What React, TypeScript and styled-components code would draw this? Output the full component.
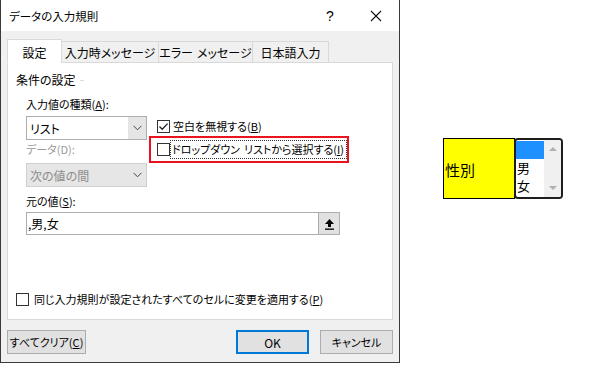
import React from 'react';
import styled, {createGlobalStyle} from 'styled-components';

const GlobalStyle = createGlobalStyle`
    body {
        margin: 0;
        background: #fff;
        font-family: "Noto Sans CJK JP", "Noto Sans", sans-serif;
        font-size: 11px;
        color: #000;
        font-feature-settings: "palt";
        white-space: nowrap;
    }
`

const U = styled.span`
    text-decoration: underline;
    text-underline-offset: 1px;
`

const WordGap = styled.span`
    display: inline-block;
    width: 4px;
`

const Check = ({checked}: {checked?: boolean}) => (
    <CheckBox>
        {checked && (
            <svg width="11" height="11" viewBox="0 0 11 11">
                <polyline points="1.5,5.5 4.2,8.3 9.6,2.6" fill="none" stroke="#222" strokeWidth="1.3"/>
            </svg>
        )}
    </CheckBox>
)

const Chevron = () => (
    <svg width="9" height="6" viewBox="0 0 9 6">
        <polyline points="0.5,0.8 4.5,4.8 8.5,0.8" fill="none" stroke="#444" strokeWidth="1"/>
    </svg>
)

export default function App() {
    return (
        <>
            <GlobalStyle/>
            <Page>
                <Dialog>
                    <TitleBar>
                        <Title>データの入力規則</Title>
                        <TitleButton>?</TitleButton>
                        <TitleButton>
                            <svg width="12" height="12" viewBox="0 0 12 12">
                                <path d="M1 1 L11 11 M11 1 L1 11" stroke="#111" strokeWidth="1.1"/>
                            </svg>
                        </TitleButton>
                    </TitleBar>
                    <Body>
                        <TabRow>
                            <Tab active width={55}>設定</Tab>
                            <Tab width={98}>入力時メッセージ</Tab>
                            <Tab width={95}>エラー<WordGap/>メッセージ</Tab>
                            <Tab width={77}>日本語入力</Tab>
                        </TabRow>
                        <Panel>
                            <GroupHeader>
                                <span>条件の設定</span>
                                <GroupLine/>
                            </GroupHeader>
                            <Criteria>
                                <LeftColumn>
                                    <FieldLabel top={8}>入力値の種類(<U>A</U>):</FieldLabel>
                                    <Select top={4}>
                                        <SelectText>リスト</SelectText>
                                        <DropButton><Chevron/></DropButton>
                                    </Select>
                                    <FieldLabel top={1} disabled>データ(D):</FieldLabel>
                                    <Select top={6} disabled>
                                        <SelectText>次の値の間</SelectText>
                                        <DropButton disabled><Chevron/></DropButton>
                                    </Select>
                                </LeftColumn>
                                <RightColumn>
                                    <CheckRow>
                                        <Check checked/>
                                        <span>空白を無視する(<U>B</U>)</span>
                                    </CheckRow>
                                    <Highlight>
                                        <Check/>
                                        <FocusText>ドロップダウン<WordGap/>リストから選択する(<U>I</U>)</FocusText>
                                    </Highlight>
                                </RightColumn>
                            </Criteria>
                            <SourceBlock>
                                <FieldLabel top={6}>元の値(<U>S</U>):</FieldLabel>
                                <SourceInput>
                                    <SourceText>,男,女</SourceText>
                                    <CollapseButton>
                                        <svg width="11" height="12" viewBox="0 0 11 12">
                                            <path d="M5.5 1 L10 6 L7 6 L7 9 L4 9 L4 6 L1 6 Z" fill="#000"/>
                                            <rect x="1" y="10.5" width="9" height="1.3" fill="#000"/>
                                        </svg>
                                    </CollapseButton>
                                </SourceInput>
                            </SourceBlock>
                            <ApplyRow>
                                <Check/>
                                <span>同じ入力規則が設定されたすべてのセルに変更を適用する(<U>P</U>)</span>
                            </ApplyRow>
                        </Panel>
                        <Footer>
                            <Button width={79}>すべてクリア(<U>C</U>)</Button>
                            <Spacer/>
                            <Button width={73} primary>OK</Button>
                            <Button width={73}>キャンセル</Button>
                        </Footer>
                    </Body>
                </Dialog>
                <Sheet>
                    <Cell>性別</Cell>
                    <ListBox>
                        <Options>
                            <Option selected/>
                            <Option>男</Option>
                            <Option>女</Option>
                        </Options>
                        <ScrollBar>
                            <Arrow up/>
                            <Arrow/>
                        </ScrollBar>
                    </ListBox>
                </Sheet>
            </Page>
        </>
    )
}

const Page = styled.div`
    display: flex;
    align-items: flex-start;
    width: 600px;
    height: 365px;
    overflow: hidden;
`

const Dialog = styled.div`
    box-sizing: border-box;
    width: 400px;
    height: 363px;
    background: #f0f0f0;
    border: 1px solid #3a3a3a;
    border-top: none;
    display: flex;
    flex-direction: column;
`

const TitleBar = styled.div`
    height: 31px;
    background: #fff;
    display: flex;
    align-items: center;
    padding-left: 8px;
`

const Title = styled.div`
    flex: 1;
    font-size: 11.5px;
`

const TitleButton = styled.div`
    width: 46px;
    height: 31px;
    display: flex;
    align-items: center;
    justify-content: center;
    font-family: "Liberation Sans", sans-serif;
    font-size: 14px;
`

const Body = styled.div`
    padding: 8px 6px 0 6px;
    display: flex;
    flex-direction: column;
`

const TabRow = styled.div`
    display: flex;
    align-items: flex-end;
    height: 24px;
    position: relative;
    z-index: 1;
`

const Tab = styled.div<{active?: boolean, width: number}>`
    box-sizing: border-box;
    width: ${({width}) => width}px;
    height: ${({active}) => active ? 24 : 22}px;
    margin-right: -1px;
    display: flex;
    align-items: center;
    justify-content: center;
    padding-top: ${({active}) => active ? 2 : 0}px;
    background: ${({active}) => active ? '#fff' : '#f0f0f0'};
    border: 1px solid #d9d9d9;
    border-bottom: ${({active}) => active ? '1px solid #fff' : '1px solid #d9d9d9'};
    font-size: 12px;
`

const Panel = styled.div`
    box-sizing: border-box;
    width: 386px;
    height: 258px;
    margin-top: -1px;
    background: #fff;
    border: 1px solid #d9d9d9;
    padding-left: 8px;
`

const GroupHeader = styled.div`
    display: flex;
    align-items: center;
    gap: 4px;
    margin-top: 9px;
    line-height: 16px;
    font-size: 12px;
`

const GroupLine = styled.div`
    width: 4px;
    height: 1px;
    background: #dcdcdc;
`

const Criteria = styled.div`
    display: flex;
    padding-left: 10px;
`

const LeftColumn = styled.div`
    display: flex;
    flex-direction: column;
    width: 121px;
`

const FieldLabel = styled.div<{top: number, disabled?: boolean}>`
    margin-top: ${({top}) => top}px;
    line-height: 16px;
    color: ${({disabled}) => disabled ? '#9a9a9a' : '#000'};
`

const Select = styled.div<{top: number, disabled?: boolean}>`
    box-sizing: border-box;
    margin-top: ${({top}) => top}px;
    height: 24px;
    display: flex;
    border: 1px solid ${({disabled}) => disabled ? '#cfcfcf' : '#adadad'};
    background: ${({disabled}) => disabled ? '#e6e6e6' : '#fff'};
    color: ${({disabled}) => disabled ? '#8c8c8c' : '#000'};
    font-size: 12px;
`

const SelectText = styled.div`
    flex: 1;
    display: flex;
    align-items: center;
    padding-left: 3px;
`

const DropButton = styled.div<{disabled?: boolean}>`
    width: 17px;
    display: flex;
    align-items: center;
    justify-content: center;
    background: ${({disabled}) => disabled ? '#e6e6e6' : '#e5e5e5'};
    border-left: 1px solid ${({disabled}) => disabled ? '#e6e6e6' : '#e5e5e5'};
`

const RightColumn = styled.div`
    display: flex;
    flex-direction: column;
    margin-left: 2px;
    padding-top: 30px;
`

const CheckBox = styled.div`
    box-sizing: border-box;
    width: 13px;
    height: 13px;
    border: 1px solid #333;
    background: #fff;
    display: flex;
    align-items: center;
    justify-content: center;
    flex-shrink: 0;
`

const CheckRow = styled.div`
    display: flex;
    align-items: center;
    gap: 3px;
    height: 16px;
    margin-left: 8px;
`

const Highlight = styled.div`
    box-sizing: border-box;
    width: 200px;
    height: 27px;
    margin-top: 2px;
    border: 2px solid #e8131c;
    display: flex;
    align-items: center;
    gap: 1px;
    padding-left: 6px;
`

const FocusText = styled.span`
    outline: 1px dotted #333;
    padding: 0 2px 0 1px;
    line-height: 17px;
`

const SourceBlock = styled.div`
    display: flex;
    flex-direction: column;
    padding-left: 10px;
`

const SourceInput = styled.div`
    box-sizing: border-box;
    width: 314px;
    height: 23px;
    margin-top: 3px;
    display: flex;
    border: 1px solid #adadad;
    background: #fff;
`

const SourceText = styled.div`
    flex: 1;
    display: flex;
    align-items: center;
    padding-left: 1px;
    font-size: 12px;
`

const CollapseButton = styled.div`
    width: 20px;
    display: flex;
    align-items: center;
    justify-content: center;
    background: #e1e1e1;
    border-left: 1px solid #adadad;
`

const ApplyRow = styled.div`
    display: flex;
    align-items: center;
    gap: 5px;
    height: 16px;
    margin-top: 56px;
`

const Footer = styled.div`
    display: flex;
    gap: 11px;
    margin-top: 10px;
`

const Spacer = styled.div`
    flex: 1;
`

const Button = styled.div<{width: number, primary?: boolean}>`
    box-sizing: border-box;
    width: ${({width}) => width}px;
    height: 24px;
    display: flex;
    align-items: center;
    justify-content: center;
    background: #e1e1e1;
    border: ${({primary}) => primary ? '2px solid #0078d7' : '1px solid #adadad'};
    font-size: ${({primary}) => primary ? 12 : 11}px;
`

const Sheet = styled.div`
    display: flex;
    margin: 138px 0 0 43px;
`

const Cell = styled.div`
    box-sizing: border-box;
    width: 72px;
    height: 61px;
    background: #ffff00;
    border: 1px solid #000;
    display: flex;
    align-items: center;
    padding: 2px 0 0 1px;
    font-size: 15px;
`

const ListBox = styled.div`
    box-sizing: border-box;
    width: 49px;
    height: 61px;
    margin-left: -1px;
    border: 2px solid #1e1e1e;
    border-radius: 4px;
    background: #fff;
    display: flex;
    overflow: hidden;
`

const Options = styled.div`
    width: 28px;
    padding-top: 1px;
`

const Option = styled.div<{selected?: boolean}>`
    height: 18px;
    line-height: 18px;
    padding-left: 1px;
    background: ${({selected}) => selected ? '#1e90ff' : 'transparent'};
    font-size: 13px;
    overflow: hidden;
`

const ScrollBar = styled.div`
    flex: 1;
    background: #f0f0f0;
    display: flex;
    flex-direction: column;
    justify-content: space-between;
    align-items: center;
    padding: 7px 0 7px;
`

const Arrow = styled.div<{up?: boolean}>`
    width: 0;
    height: 0;
    border-left: 4px solid transparent;
    border-right: 4px solid transparent;
    ${({up}) => up ? 'border-bottom: 4px solid #b0b0b0;' : 'border-top: 4px solid #b0b0b0;'}
`
